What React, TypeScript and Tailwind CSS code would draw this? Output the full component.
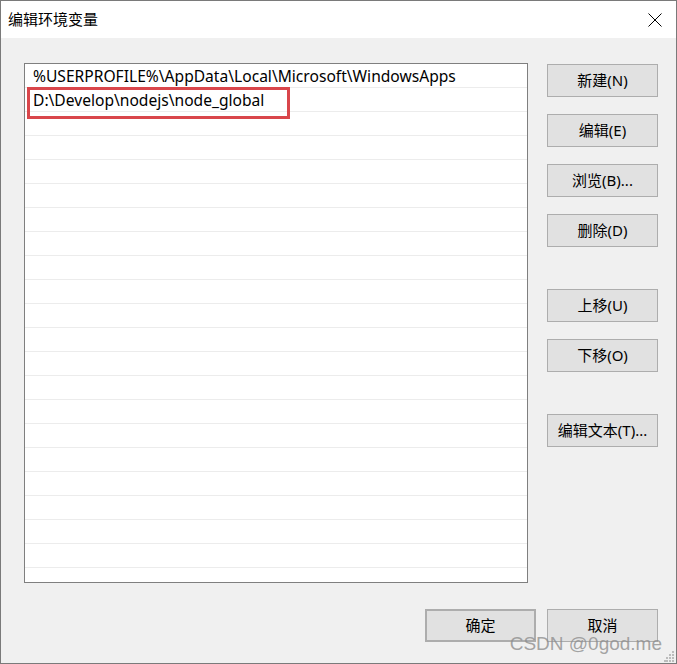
import React from 'react'

const font = "font-['Noto_Sans','Noto_Sans_CJK_SC',sans-serif]"

const paths = [
  '%USERPROFILE%\\AppData\\Local\\Microsoft\\WindowsApps',
  'D:\\Develop\\nodejs\\node_global',
]

function Btn({ label, className = '' }: { label: string; className?: string }) {
  return (
    <div
      className={`h-[33px] w-[111px] flex items-center justify-center bg-[#e1e1e1] border border-[#adadad] text-[15px] text-black ${className}`}
    >
      {label}
    </div>
  )
}

export default function App() {
  const rows = Array.from({ length: 22 }, (_, i) => paths[i] ?? '')

  return (
    <div className={`w-[677px] h-[664px] border border-[#7a7a7a] flex flex-col ${font} relative`}>
      {/* title bar */}
      <div className="h-[37px] bg-white flex items-center justify-between pl-[7px] pr-[14px]">
        <span className="text-[15px] text-black">编辑环境变量</span>
        <svg width="14" height="14" viewBox="0 0 14 14">
          <path d="M0.5 0.5 L13.5 13.5 M13.5 0.5 L0.5 13.5" stroke="#000" strokeWidth="1" />
        </svg>
      </div>

      <div className="flex-1 bg-[#f0f0f0] flex flex-col">
        <div className="flex pl-[23px] pt-[25px]">
          <div className="relative w-[504px] h-[520px] border border-[#7f7f7f] bg-white overflow-hidden">
            {rows.map((p, i) => (
              <div
                key={i}
                className="h-[24px] border-b border-[#ececec] pl-[8px] pt-[2px] flex items-center text-[15.6px] text-black leading-none whitespace-nowrap"
              >
                {p}
              </div>
            ))}
            <div className="absolute left-[2px] top-[23px] w-[263px] h-[32px] border-[3px] border-[#d9464b]" />
          </div>

          <div className="ml-[19px] pt-[1px] flex flex-col">
            <Btn label="新建(N)" />
            <Btn label="编辑(E)" className="mt-[17px]" />
            <Btn label="浏览(B)..." className="mt-[17px]" />
            <Btn label="删除(D)" className="mt-[17px]" />
            <Btn label="上移(U)" className="mt-[42px]" />
            <Btn label="下移(O)" className="mt-[17px]" />
            <Btn label="编辑文本(T)..." className="mt-[42px]" />
          </div>
        </div>

        <div className="mt-[26px] flex justify-end gap-[11px] pr-[18px]">
          <Btn label="确定" className="border-2 border-[#0078d7]" />
          <Btn label="取消" />
        </div>
      </div>

      {/* watermark */}
      <div className="absolute right-[14px] bottom-[10px] text-[19px] leading-none text-[#8e8e8e]/80 font-['Liberation_Sans',sans-serif]">
        CSDN @0god.me
      </div>

      {/* resize grip */}
      <svg className="absolute right-[1px] bottom-[1px]" width="11" height="11" viewBox="0 0 11 11">
        {[
          [8, 0], [8, 3], [5, 3], [8, 6], [5, 6], [2, 6], [8, 9], [5, 9], [2, 9], [0, 9],
        ].map(([x, y], i) => (
          <rect key={i} x={x} y={y} width="2" height="2" fill="#bcbcbc" />
        ))}
      </svg>
    </div>
  )
}
